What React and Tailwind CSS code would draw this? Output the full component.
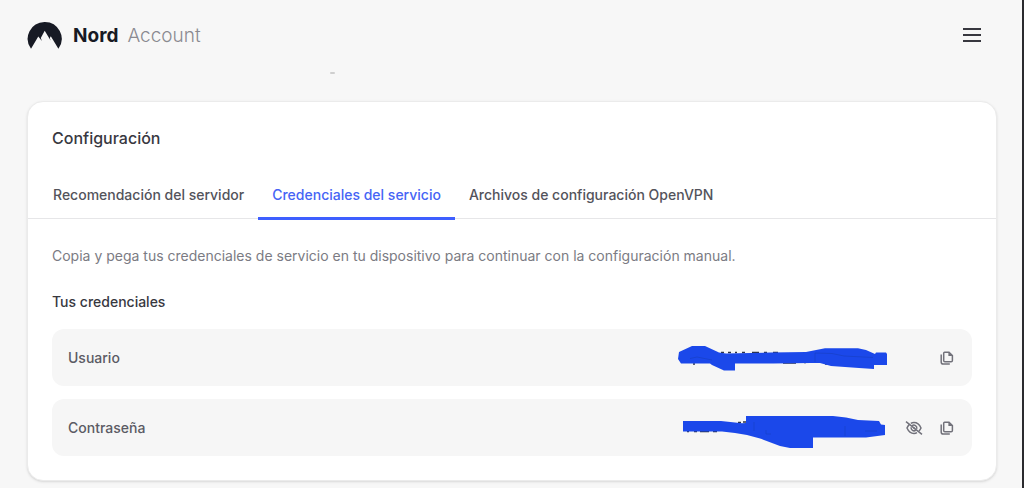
import React, { useState } from 'react';
import clsx from 'clsx';

const TABS = [
  'Recomendación del servidor',
  'Credenciales del servicio',
  'Archivos de configuración OpenVPN',
];

const NordLogo = () => (
  <svg className="w-[35px] h-7" viewBox="0 0 35 28" aria-hidden="true">
    <path
      fill="#171a24"
      d="M4 26.7A17 16.8 0 0 1 17.5 0A17 16.8 0 0 1 31.4 26.7L23.8 14.2L22.8 15.9L23.6 18.6L17.7 8.8L13.8 16L14.9 19L12.3 15.8L11.3 14.4Z"
    />
  </svg>
);

const MenuIcon = () => (
  <svg className="w-[18px] h-4" viewBox="0 0 18 16" aria-hidden="true">
    <path d="M0 1H18M0 7H18M0 13H18" stroke="#38383f" strokeWidth="2" />
  </svg>
);

const CopyIcon = () => (
  <svg className="w-3.5 h-3.5" viewBox="0 0 14 14" fill="none" stroke="#71717a" aria-hidden="true">
    <path
      d="M4.6 1.2H9L12.4 4.5V9.4Q12.4 10.7 11.1 10.7H4.9Q3.7 10.7 3.7 9.4V2.2Q3.7 1.2 4.6 1.2Z"
      strokeWidth="1.5"
    />
    <path d="M8.4 0.9V5.1H12.8Z" fill="#71717a" stroke="none" />
    <path d="M1.2 3.5V11Q1.2 13.1 3.3 13.1H9.8" strokeWidth="1.5" />
  </svg>
);

const EyeOffIcon = () => (
  <svg className="w-[18px] h-3.5" viewBox="0 0 18 14" fill="none" stroke="#71717a" strokeWidth="1.5" aria-hidden="true">
    <path d="M5.8 2.4Q7.3 1.6 9 1.6Q13.6 1.6 16 7Q15.2 8.8 14 10.1M12 11.6Q10.6 12.4 9 12.4Q4.4 12.4 2 7Q2.8 5 4.2 3.6" />
    <path d="M7 4.9A2.9 2.9 0 0 1 11.7 7.9M10.8 9.2A2.9 2.9 0 0 1 6.2 6.2M8.3 6.3L9.9 7.9" />
    <path d="M1 0.7L17 13.3" />
  </svg>
);

const UserScribble = () => (
  <svg className="w-[210px] h-[26px]" viewBox="0 0 210 26" aria-hidden="true">
    <path
      d="M43 7.5H46M50 7.5H53M57 7.5H59M64 7.5H67M74 7.5H81M86 7.5H89M95 7.5H100M15 19H17M34 19H36M105 18H118M126 17.5H128M147 19H149"
      stroke="#2c3244"
      strokeWidth="1.5"
    />
    <path
      fill="#1b48ea"
      d="M1 7L14 1H27L41 7.5L48 8.5L92 7.5L128 7L147 3.2H180L188 5L197 9L198 7.5H208L209 9V20H196V24L181 23L153 21L142 18H133L95 18.5H57V25.5H46L34 20L32 18.5H3L0 14Z"
    />
    <path d="M12 13.5L19 12L34 15M137 17V8L154 8.5L166 11L195 12.5" fill="none" stroke="#173db8" strokeWidth="0.5" />
  </svg>
);

const PasswordScribble = () => (
  <svg className="w-[205px] h-10" viewBox="0 -8 205 40" aria-hidden="true">
    <path d="M4 15.5H6M11 15.5H14M17 15.5H26M30 15.5H34M55 6.5H58M60 6H64" stroke="#2c3244" strokeWidth="1.5" />
    <path
      fill="#1b48ea"
      d="M0 5H38L59 7.3L63 7V0H150L163 1.5L175 4L196 5L198 8.5L202 9V19L183 21.5H130V32H107L97 30L78 22.8L64 19L52 17L39 15.5H0Z"
    />
    <path d="M71 6V15M83 14V18H88M162 10V20M182 15H194" fill="none" stroke="#173db8" strokeWidth="0.5" />
  </svg>
);

const CredentialRow = ({ label, value, secret }) => (
  <div className="flex items-center rounded-xl bg-[#f6f6f6] h-[57px] pl-4 pr-[18px]">
    <dt className="flex-1 font-medium text-[#5b5b64]">{label}</dt>
    <dd className="flex items-center">
      {value}
      <div className="flex items-center justify-end gap-[17px] w-[66px]">
        {secret && (
          <button type="button" aria-label="Mostrar contraseña">
            <EyeOffIcon />
          </button>
        )}
        <button type="button" aria-label={`Copiar ${label}`}>
          <CopyIcon />
        </button>
      </div>
    </dd>
  </div>
);

const App = () => {
  const [active, setActive] = useState(1);

  return (
    <div className="min-h-screen bg-[#f7f7f7] border-r-2 border-[#2b2b2e] pl-[27px] pr-[25px] pb-[7px] font-[Inter,sans-serif] text-sm leading-5">
      <header className="flex items-center justify-between h-[71px]">
        <a href="#" className="flex items-center text-[19px] leading-6">
          <NordLogo />
          <span className="ml-[11px] font-bold text-[#171a24]">Nord</span>
          <span className="ml-[9px] font-light text-[#8a8a90]">Account</span>
        </a>
        <button type="button" aria-label="Menú" className="mr-4">
          <MenuIcon />
        </button>
      </header>

      <div className="h-[30px] pl-[303px] pt-px">
        <div className="w-[5px] h-0.5 rounded bg-[#cfcfcf]" />
      </div>

      <main className="rounded-2xl border border-[#ebebeb] bg-white shadow-sm">
        <h1 className="px-6 pt-6 text-base leading-6 font-medium text-[#38383f]">
          Configuración
        </h1>

        <div role="tablist" className="flex mt-6 px-[11px] border-b border-[#e6e6e8]">
          {TABS.map((tab, index) => (
            <button
              key={tab}
              type="button"
              role="tab"
              aria-selected={active === index}
              onClick={() => setActive(index)}
              className={clsx(
                'px-3.5 pt-[11px] pb-3 -mb-0.5 border-b-3 font-medium whitespace-nowrap',
                active === index
                  ? 'border-[#3e5fff] text-[#4664f5]'
                  : 'border-transparent text-[#53535b]'
              )}
            >
              {tab}
            </button>
          ))}
        </div>

        <section className="px-6 pt-[27px] pb-6">
          <p className="text-[#7b7b83]">
            Copia y pega tus credenciales de servicio en tu dispositivo para continuar con la
            configuración manual.
          </p>
          <h2 className="mt-[26px] font-medium text-[#38383f]">Tus credenciales</h2>
          <dl className="flex flex-col gap-[13px] mt-[17px]">
            <CredentialRow label="Usuario" value={<UserScribble />} />
            <CredentialRow label="Contraseña" value={<PasswordScribble />} secret />
          </dl>
        </section>
      </main>
    </div>
  );
};

export default App;
